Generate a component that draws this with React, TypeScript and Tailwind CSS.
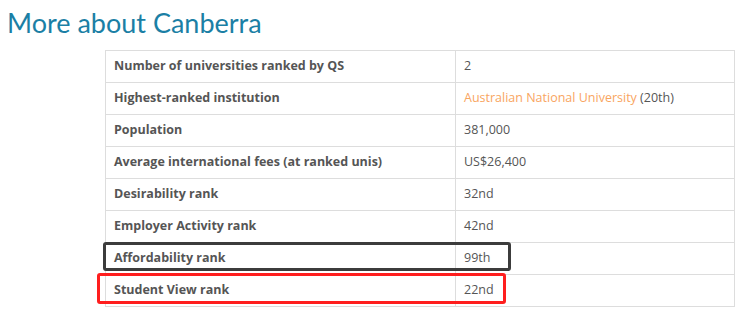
import React from "react";

const rows: { label: string; value: React.ReactNode }[] = [
  { label: "Number of universities ranked by QS", value: "2" },
  {
    label: "Highest-ranked institution",
    value: (
      <>
        <a className="text-[#f9a55f]">Australian National University</a> (20th)
      </>
    ),
  },
  { label: "Population", value: "381,000" },
  { label: "Average international fees (at ranked unis)", value: "US$26,400" },
  { label: "Desirability rank", value: "32nd" },
  { label: "Employer Activity rank", value: "42nd" },
  { label: "Affordability rank", value: "99th" },
  { label: "Student View rank", value: "22nd" },
];

export default function App() {
  return (
    <div className="w-[744px] h-[329px] bg-white font-['Open_Sans',sans-serif] text-[#555]">
      <h1 className="h-[50px] pl-[7px] pt-[6px] text-[27px] leading-[34px] text-[#1b7fa5] font-['Lato',sans-serif]">
        More about Canberra
      </h1>
      <div className="relative ml-[105px] w-[630px]">
        <table className="w-full border-collapse text-[12.5px]">
          <tbody>
            {rows.map((r) => (
              <tr key={r.label} className="h-[32px]">
                <td className="w-[350px] border border-[#dddddd] px-2 font-bold">{r.label}</td>
                <td className="border border-[#dddddd] px-2">{r.value}</td>
              </tr>
            ))}
          </tbody>
        </table>
        <div className="absolute left-[-2px] top-[192px] w-[408px] h-[29px] border-[3px] border-[#3c3c3c] rounded-[3px]" />
        <div className="absolute left-[-8px] top-[223px] w-[409px] h-[31px] border-[3px] border-[#ff1e1e] rounded-[3px]" />
      </div>
    </div>
  );
}
